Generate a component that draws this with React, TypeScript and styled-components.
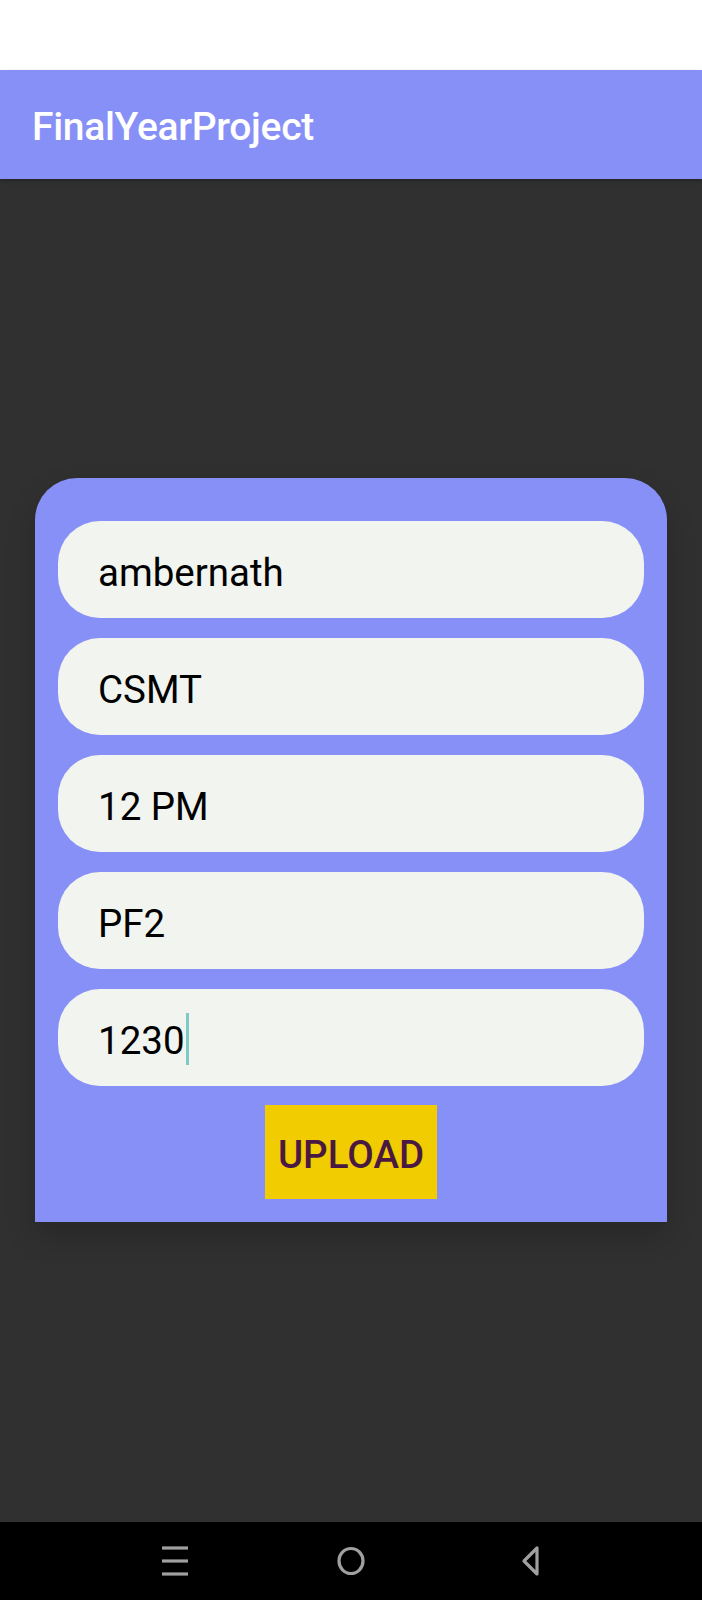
import React from "react";
import styled, { createGlobalStyle } from "styled-components";

const GlobalStyle = createGlobalStyle`
  html, body { margin: 0; padding: 0; background: #303030; }
  body { font-family: Roboto, "Noto Sans", sans-serif; }
  * { box-sizing: border-box; }
`;

const Screen = styled.div`
  width: 702px;
  height: 1600px;
  display: flex;
  flex-direction: column;
  background: #303030;
`;

const StatusBar = styled.div`
  height: 70px;
  background: #ffffff;
`;

const AppBar = styled.header`
  height: 109px;
  background: #8790f6;
  display: flex;
  align-items: center;
  padding-left: 32px;
  padding-top: 4px;
  box-shadow: 0 2px 4px rgba(0, 0, 0, 0.25);
  position: relative;
  z-index: 1;
`;

const Title = styled.h1`
  margin: 0;
  font-family: Roboto, sans-serif;
  font-weight: 500;
  font-size: 39px;
  color: #ffffff;
  letter-spacing: -0.3px;
`;

const Content = styled.main`
  flex: 1;
  padding: 299px 35px 0 35px;
`;

const Card = styled.section`
  width: 632px;
  background: #8790f6;
  border-radius: 42px 42px 0 0;
  padding: 43px 23px 23px 23px;
  display: flex;
  flex-direction: column;
  align-items: center;
  gap: 20px;
  box-shadow: 0 14px 30px rgba(0, 0, 0, 0.18);
`;

const Field = styled.div`
  width: 100%;
  height: 97px;
  background: #f2f4ef;
  border-radius: 42px;
  display: flex;
  align-items: center;
  padding: 5px 0 0 40px;
  font-family: Roboto, sans-serif;
  font-size: 38.5px;
  color: #000000;
`;

const Caret = styled.span`
  display: inline-block;
  width: 3px;
  height: 52px;
  background: #80cbc4;
  margin-left: 1px;
  margin-top: -2px;
`;

const UploadButton = styled.button`
  margin-top: -1px;
  width: 172px;
  height: 94px;
  border: none;
  border-radius: 0;
  background: #f0cc00;
  color: #4a1942;
  font-family: Roboto, sans-serif;
  font-weight: 500;
  font-size: 38.5px;
  padding: 4px 0 0 0;
  cursor: pointer;
`;

const NavBar = styled.nav`
  height: 78px;
  background: #000000;
  display: flex;
  align-items: center;
  justify-content: center;
  gap: 136px;
`;

const NavIcon = styled.svg`
  width: 40px;
  height: 40px;
  display: block;
`;

const fields = ["ambernath", "CSMT", "12 PM", "PF2"];

export default function App() {
  return (
    <>
      <GlobalStyle />
      <Screen>
        <StatusBar />
        <AppBar>
          <Title>FinalYearProject</Title>
        </AppBar>
        <Content>
          <Card>
            {fields.map((f) => (
              <Field key={f}>{f}</Field>
            ))}
            <Field>
              1230
              <Caret />
            </Field>
            <UploadButton>UPLOAD</UploadButton>
          </Card>
        </Content>
        <NavBar>
          <NavIcon viewBox="0 0 40 40">
            <g stroke="#a0a0a0" strokeWidth="3.2">
              <line x1="7" y1="7" x2="33" y2="7" />
              <line x1="7" y1="20" x2="33" y2="20" />
              <line x1="7" y1="33" x2="33" y2="33" />
            </g>
          </NavIcon>
          <NavIcon viewBox="0 0 40 40">
            <ellipse cx="20" cy="20" rx="12" ry="12.5" fill="none" stroke="#a0a0a0" strokeWidth="3.2" />
          </NavIcon>
          <NavIcon viewBox="0 0 40 40">
            <path
              d="M30 7 L30 33 L17 20 Z"
              fill="none"
              stroke="#a0a0a0"
              strokeWidth="3.2"
              strokeLinejoin="round"
            />
          </NavIcon>
        </NavBar>
      </Screen>
    </>
  );
}
